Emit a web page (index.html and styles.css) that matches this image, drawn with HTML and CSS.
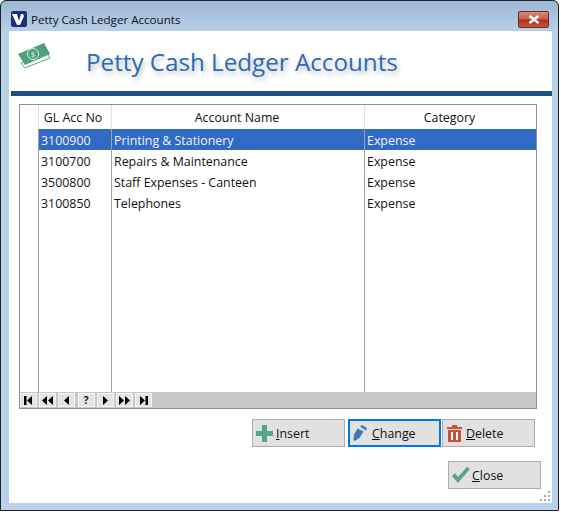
FILE: index.html
```html
<!DOCTYPE html>
<html lang="en">

<head>
    <meta charset="UTF-8">
    <title>Petty Cash Ledger Accounts</title>
    <link rel="stylesheet" href="styles.css">
</head>

<body>
    <div class="window">
        <div class="titlebar">
            <div class="app-icon">
                <svg width="16" height="16" viewBox="0 0 16 16">
                    <path d="M1 3h5l2 7 2-7h2l1 2-4 9H6z" fill="#fff" />
                </svg>
            </div>
            <div class="window-title">Petty Cash Ledger Accounts</div>
            <div class="close-x">
                <svg width="12" height="9" viewBox="0 0 12 9">
                    <path d="M1.5 1l9 7M10.5 1l-9 7" stroke="#fff" stroke-width="2.4" fill="none" />
                </svg>
            </div>
        </div>
        <div class="content">
            <div class="banner">
                <svg class="banner-icon" width="34" height="26" viewBox="0 0 34 26">
                    <path d="M3 20l25-11 4 6-25 10z" fill="none" stroke="#55a684" stroke-width="1" />
                    <path d="M0 11L26 0l6 11-25 11z" fill="#4f9f7c" />
                    <circle cx="15" cy="11" r="5.5" fill="none" stroke="#d8eee5" stroke-width="1" />
                    <text x="15" y="14" class="dollar">$</text>
                </svg>
                <h1>Petty Cash Ledger Accounts</h1>
            </div>
            <div class="rule"></div>

            <div class="grid">
                <div class="grid-head">
                    <div class="cell-mark"></div>
                    <div class="cell-code">GL Acc No</div>
                    <div class="cell-name">Account Name</div>
                    <div class="cell-cat">Category</div>
                </div>
                <div class="grid-row selected">
                    <div class="cell-mark"></div>
                    <div class="cell-code">3100900</div>
                    <div class="cell-name">Printing &amp; Stationery</div>
                    <div class="cell-cat">Expense</div>
                </div>
                <div class="grid-row">
                    <div class="cell-mark"></div>
                    <div class="cell-code">3100700</div>
                    <div class="cell-name">Repairs &amp; Maintenance</div>
                    <div class="cell-cat">Expense</div>
                </div>
                <div class="grid-row">
                    <div class="cell-mark"></div>
                    <div class="cell-code">3500800</div>
                    <div class="cell-name">Staff Expenses - Canteen</div>
                    <div class="cell-cat">Expense</div>
                </div>
                <div class="grid-row">
                    <div class="cell-mark"></div>
                    <div class="cell-code">3100850</div>
                    <div class="cell-name">Telephones</div>
                    <div class="cell-cat">Expense</div>
                </div>
                <div class="grid-row filler">
                    <div class="cell-mark"></div>
                    <div class="cell-code"></div>
                    <div class="cell-name"></div>
                    <div class="cell-cat"></div>
                </div>
                <div class="grid-nav">
                    <div class="nav-btn"><svg width="9" height="9" viewBox="0 0 9 9"><path d="M0 0h2.500v9H0zM8 0v9L3 4.500z" /></svg></div>
                    <div class="nav-btn"><svg width="11" height="9" viewBox="0 0 11 9"><path d="M5 0v9L0 4.500zM11 0v9L6 4.500z" /></svg></div>
                    <div class="nav-btn"><svg width="9" height="9" viewBox="0 0 9 9"><path d="M7 0v9L2 4.500z" /></svg></div>
                    <div class="nav-btn nav-help">?</div>
                    <div class="nav-btn"><svg width="9" height="9" viewBox="0 0 9 9"><path d="M2 0v9l5-4.500z" /></svg></div>
                    <div class="nav-btn"><svg width="11" height="9" viewBox="0 0 11 9"><path d="M0 0v9l5-4.500zM6 0v9l5-4.500z" /></svg></div>
                    <div class="nav-btn"><svg width="9" height="9" viewBox="0 0 9 9"><path d="M1 0v9l5-4.500zM6.500 0H9v9H6.500z" /></svg></div>
                </div>
            </div>

            <div class="actions">
                <div class="btn btn-insert">
                    <svg width="17" height="17" viewBox="0 0 17 17"><path d="M6 0h5v6h6v5h-6v6H6v-6H0V6h6z" fill="#55a684" /></svg>
                    <span><u>I</u>nsert</span>
                </div>
                <div class="btn btn-change">
                    <svg width="14" height="16" viewBox="0 0 14 16">
                        <path d="M4.500 3.500l6 3-4 6.500-5 3-1-1 .5-5.500z" fill="#3f78bf" />
                        <path d="M7 1.500l2-1.500 5 3-1 2.500z" fill="#3f78bf" />
                    </svg>
                    <span><u>C</u>hange</span>
                </div>
                <div class="btn btn-delete">
                    <svg width="15" height="17" viewBox="0 0 15 17">
                        <path d="M0 2h5V0h5v2h5v2H0zM1 5h13v12H1z" fill="#c9513a" />
                        <path d="M4 7h2v8H4zM9 7h2v8H9z" fill="#fff" />
                    </svg>
                    <span><u>D</u>elete</span>
                </div>
            </div>
            <div class="actions-close">
                <div class="btn btn-close">
                    <svg width="18" height="16" viewBox="0 0 18 16"><path d="M0 9l3-3 3 4 9-10 3 2-12 14z" fill="#55a684" /></svg>
                    <span><u>C</u>lose</span>
                </div>
            </div>
            <svg class="grip" width="11" height="10" viewBox="0 0 11 10">
                <path d="M8 0h2v2H8zM4 4h2v2H4zM8 4h2v2H8zM0 8h2v2H0zM4 8h2v2H4zM8 8h2v2H8z" fill="#a8a8a8" />
            </svg>
        </div>
    </div>
</body>

</html>
```

FILE: styles.css
```css
body {
    margin: 0;
    background-color: #fff;
    font-family: 'Open Sans', 'Noto Sans', sans-serif;
    font-size: 12.4px;
    color: #111;
}

.window {
    width: 559px;
    height: 511px;
    box-sizing: border-box;
    border: 1px solid #222;
    border-radius: 6px 6px 0 0;
    background: linear-gradient(180deg, #9cb7d4 0, #b9d1ea 32px, #b9d1ea 100%);
    padding: 0 6px 7px 8px;
    display: flex;
    flex-direction: column;
}

.titlebar {
    height: 30px;
    box-sizing: border-box;
    padding-top: 6px;
    display: flex;
    align-items: center;
    flex-shrink: 0;
}

.app-icon {
    width: 16px;
    height: 16px;
    margin: 0 4px 0 2px;
    background-color: #1c2f7d;
    border-radius: 2px;
}

.window-title {
    flex: 1;
    font-size: 11.6px;
}

.close-x {
    width: 31px;
    height: 17px;
    margin-right: 3px;
    box-sizing: border-box;
    border: 1px solid #6f2a22;
    border-radius: 2px;
    background: linear-gradient(180deg, #d98a7c 0, #c9604f 45%, #b0321f 55%, #c2553f 100%);
    display: flex;
    align-items: center;
    justify-content: center;
}

.content {
    flex: 1;
    background-color: #fff;
    position: relative;
    padding: 0 0 0 2px;
    display: flex;
    flex-direction: column;
}

.banner {
    height: 60px;
    display: flex;
    align-items: center;
    padding-left: 7px;
    flex-shrink: 0;
}

.banner-icon {
    align-self: flex-start;
    margin-top: 12px;
}

.banner h1 {
    margin: 0 0 0 34px;
    font-size: 24.2px;
    font-weight: 400;
    color: #2a6bb5;
    text-shadow: 2px 3px 5px rgba(60, 60, 60, 0.35);
}

.rule {
    height: 5px;
    background-color: #1f4f82;
    flex-shrink: 0;
}

.grid {
    width: 518px;
    height: 305px;
    margin: 8px 0 0 8px;
    box-sizing: border-box;
    border: 1px solid #8c9096;
    display: flex;
    flex-direction: column;
    flex-shrink: 0;
}

.grid-head,
.grid-row {
    display: flex;
    height: 21px;
    line-height: 23px;
    flex-shrink: 0;
}

.grid-head {
    height: 24px;
    line-height: 25px;
    text-align: center;
}

.grid-head>div {
    border-right-color: #e2e2e2;
}

.filler {
    flex: 1;
}

.cell-mark {
    width: 18px;
    border-right: 1px solid #a0a0a0;
}

.cell-code {
    width: 73px;
    border-right: 1px solid #a0a0a0;
    padding-left: 2px;
    box-sizing: border-box;
}

.cell-name {
    width: 253px;
    border-right: 1px solid #a0a0a0;
    padding-left: 2px;
    box-sizing: border-box;
}

.cell-cat {
    flex: 1;
    padding-left: 2px;
}

.grid-head .cell-code {
    padding: 0 4px 0 0;
}

.grid-head .cell-name,
.grid-head .cell-cat {
    padding: 0 2px 0 0;
}

.selected .cell-code,
.selected .cell-name,
.selected .cell-cat {
    background-color: #316ac5;
    color: #f2f2f2;
}

.grid-nav {
    height: 16px;
    background-color: #c8c8c8;
    display: flex;
    gap: 2.2px;
    align-items: center;
    flex-shrink: 0;
}

.nav-btn {
    width: 17px;
    height: 14px;
    box-sizing: border-box;
    background-color: #e4e4e4;
    border: 1px solid #f4f4f4;
    display: flex;
    align-items: center;
    justify-content: center;
}

.nav-help {
    font-size: 10px;
    font-weight: 700;
}

.actions {
    display: flex;
    margin: 10px 0 0 241px;
    gap: 3px;
    flex-shrink: 0;
}

.actions-close {
    margin: 14px 0 0 437px;
    flex-shrink: 0;
}

.btn {
    width: 93px;
    height: 28px;
    box-sizing: border-box;
    background-color: #e1e1e1;
    border: 1px solid #adadad;
    display: flex;
    align-items: center;
    padding-left: 3px;
}

.btn-insert span {
    margin-left: 3px;
}

.btn-change {
    border: 2px solid #0078d7;
    padding-left: 3px;
    margin-right: -2px;
}

.btn-change span {
    margin-left: 5px;
}

.btn-delete {
    padding-left: 4px;
}

.btn-delete span {
    margin-left: 4px;
}

.btn-close span {
    margin-left: 2px;
}

.grip {
    position: absolute;
    right: 1px;
    bottom: 2px;
}

.dollar {
    font-size: 8px;
    fill: #e4f3ec;
    text-anchor: middle;
}
```
